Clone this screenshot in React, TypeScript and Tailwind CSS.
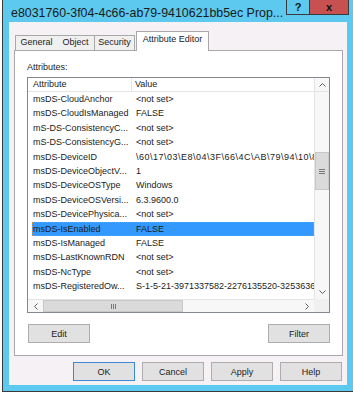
import React from "react";

const rows: [string, string][] = [
  ["msDS-CloudAnchor", "<not set>"],
  ["msDS-CloudIsManaged", "FALSE"],
  ["mS-DS-ConsistencyC...", "<not set>"],
  ["mS-DS-ConsistencyG...", "<not set>"],
  ["msDS-DeviceID", "\\60\\17\\03\\E8\\04\\3F\\66\\4C\\AB\\79\\94\\10\\8A\\2F"],
  ["msDS-DeviceObjectV...", "1"],
  ["msDS-DeviceOSType", "Windows"],
  ["msDS-DeviceOSVersi...", "6.3.9600.0"],
  ["msDS-DevicePhysica...", "<not set>"],
  ["msDS-IsEnabled", "FALSE"],
  ["msDS-IsManaged", "FALSE"],
  ["msDS-LastKnownRDN", "<not set>"],
  ["msDS-NcType", "<not set>"],
  ["msDS-RegisteredOw...", "S-1-5-21-3971337582-2276135520-3253636854-1104"],
];

function Btn({ label, def }: { label: string; def?: boolean }) {
  return (
    <div
      className={
        "w-[62px] h-[19px] flex items-center justify-center bg-[#e1e1e1] text-[9px] leading-[10px] text-[#1b1b1b] border " +
        (def ? "border-[#3c8ad6]" : "border-[#adadad]")
      }
    >
      {label}
    </div>
  );
}

export default function App() {
  return (
    <div className="w-[353px] h-[394px] overflow-hidden bg-white font-['Liberation_Sans',Arial,sans-serif] text-[#1b1b1b]">
      <div className="ml-[2px] w-[360px] h-[392px] border-l border-b border-[#3a3a3a] bg-[#5dc9ee] flex flex-col">
        {/* title bar */}
        <div className="h-[22px] flex items-start">
          <div className="pl-[8px] pt-[7px] w-[283px] text-[12.4px] leading-[13px] text-[#1a1a1a] whitespace-nowrap overflow-hidden">
            e8031760-3f04-4c66-ab79-9410621bb5ec Prop...
          </div>
          <div className="w-[24px] h-[15px] border-x border-b border-[#3a3a3a] flex items-center justify-center text-[11px] font-bold leading-none text-[#111]">
            ?
          </div>
          <div className="w-[39px] h-[15px] border-r border-b border-[#3a3a3a] bg-[#c75050] flex items-center justify-center text-[11px] font-bold leading-none text-[#111]">
            x
          </div>
        </div>
        {/* client area */}
        <div className="ml-[6px] w-[338px] h-[363px] bg-[#f5f1f5] flex flex-col">
          {/* tabs */}
          <div className="h-[28px] flex items-end pl-[6px]">
            <div className="h-[15px] w-[43px] border-t border-l border-r border-[#a8a8a8] bg-[#f0f0f0] text-[9px] leading-[13px] text-center">
              General
            </div>
            <div className="h-[15px] w-[38px] -ml-px border-t border-r border-[#a8a8a8] bg-[#f0f0f0] text-[9px] leading-[13px] text-center">
              Object
            </div>
            <div className="h-[15px] w-[40px] border-t border-r border-[#a8a8a8] bg-[#f0f0f0] text-[9px] leading-[13px] text-center">
              Security
            </div>
            <div className="relative z-10 mb-[-1px] ml-[1px] h-[20px] w-[73px] border-t border-l border-r border-[#a8a8a8] bg-white text-[9px] leading-[15px] text-center">
              Attribute Editor
            </div>
          </div>
          {/* panel */}
          <div className="ml-[5px] w-[329px] h-[306px] border border-[#a8a8a8] bg-white flex flex-col px-[12px] pt-[10px]">
            <div className="h-[12px] text-[9px] leading-[12px]">Attributes:</div>
            {/* list box */}
            <div className="mt-[4px] w-[303px] h-[236px] border border-[#828790] flex flex-col bg-white">
              <div className="flex h-[221px]">
                <div className="w-[286px] overflow-hidden flex flex-col">
                  <div className="h-[14px] flex border-b border-[#e5e5e5] text-[9px] leading-[13px] shrink-0">
                    <div className="w-[104px] shrink-0 pl-[5px] border-r border-[#e5e5e5]">Attribute</div>
                    <div className="pl-[3px]">Value</div>
                  </div>
                  {rows.map(([a, v], i) => (
                    <div
                      key={i}
                      className={
                        "ml-[4px] h-[14.4px] shrink-0 flex text-[9px] leading-[14px] whitespace-nowrap " +
                        (i === 9 ? "bg-[#3399ff] outline outline-1 outline-dotted outline-offset-[-1px] outline-[#d08a3a]" : "")
                      }
                    >
                      <div className="w-[104px] shrink-0 pl-[1px] overflow-hidden">{a}</div>
                      <div className={"shrink-0 " + (i === 4 ? "tracking-[0.5px]" : "")}>{v}</div>
                    </div>
                  ))}
                </div>
                {/* vertical scrollbar */}
                <div className="w-[15px] flex flex-col bg-[#f7f7f7] border-l border-[#e3e3e3]">
                  <div className="h-[14px] flex items-center justify-center border-b border-[#e3e3e3]">
                    <svg width="7" height="4" viewBox="0 0 7 4"><path d="M0.5 3.5 L3.5 0.5 L6.5 3.5" fill="none" stroke="#606060" strokeWidth="1" /></svg>
                  </div>
                  <div className="h-[60px]" />
                  <div className="h-[38px] bg-[#dadada] border border-[#c8c8c8] flex flex-col items-center justify-center gap-[1px]">
                    <div className="w-[6px] h-px bg-[#7a7a7a]" />
                    <div className="w-[6px] h-px bg-[#7a7a7a]" />
                    <div className="w-[6px] h-px bg-[#7a7a7a]" />
                  </div>
                  <div className="flex-1" />
                  <div className="h-[14px] flex items-center justify-center">
                    <svg width="7" height="4" viewBox="0 0 7 4"><path d="M0.5 0.5 L3.5 3.5 L6.5 0.5" fill="none" stroke="#606060" strokeWidth="1" /></svg>
                  </div>
                </div>
              </div>
              {/* horizontal scrollbar */}
              <div className="flex h-[13px]">
                <div className="w-[286px] flex bg-[#f7f7f7] border-t border-[#e3e3e3]">
                  <div className="w-[15px] flex items-center justify-center">
                    <svg width="4" height="7" viewBox="0 0 4 7"><path d="M3.5 0.5 L0.5 3.5 L3.5 6.5" fill="none" stroke="#606060" strokeWidth="1" /></svg>
                  </div>
                  <div className="w-[140px] bg-[#dadada] border border-[#c8c8c8] flex items-center justify-center gap-[1px]">
                    <div className="w-px h-[5px] bg-[#7a7a7a]" />
                    <div className="w-px h-[5px] bg-[#7a7a7a]" />
                    <div className="w-px h-[5px] bg-[#7a7a7a]" />
                  </div>
                  <div className="flex-1" />
                  <div className="w-[14px] flex items-center justify-center">
                    <svg width="4" height="7" viewBox="0 0 4 7"><path d="M0.5 0.5 L3.5 3.5 L0.5 6.5" fill="none" stroke="#606060" strokeWidth="1" /></svg>
                  </div>
                </div>
                <div className="w-[15px] bg-[#f0f0f0]" />
              </div>
            </div>
            {/* Edit / Filter */}
            <div className="mt-[11px] flex justify-between pl-[1px]">
              <Btn label="Edit" />
              <Btn label="Filter" />
            </div>
          </div>
          {/* bottom buttons */}
          <div className="mt-[6px] pl-[64px] flex gap-[7px]">
            <Btn label="OK" def />
            <Btn label="Cancel" />
            <Btn label="Apply" />
            <Btn label="Help" />
          </div>
        </div>
      </div>
    </div>
  );
}
